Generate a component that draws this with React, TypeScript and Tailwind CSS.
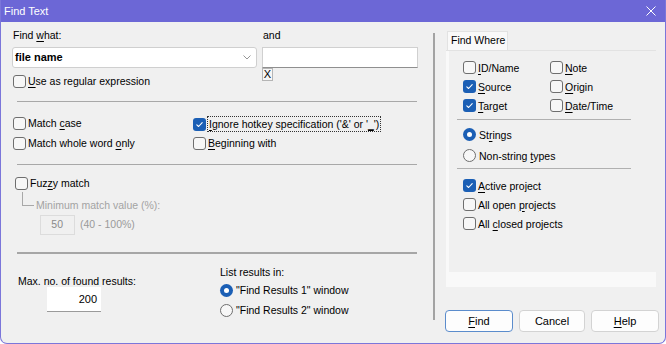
import React from 'react'

const font = { fontFamily: '"Liberation Sans", Arial, sans-serif' }

function U({ children }: { children: React.ReactNode }) {
  return <span className="underline underline-offset-[1.5px] decoration-[0.5px]">{children}</span>
}

function Box({ checked }: { checked?: boolean }) {
  if (checked) {
    return (
      <span className="flex h-[13px] w-[13px] shrink-0 items-center justify-center rounded-[3px] bg-[#1b5fb5]">
        <svg width="9" height="9" viewBox="0 0 9 9" fill="none">
          <path d="M1.8 4.8 L3.6 6.5 L7.2 2.6" stroke="white" strokeWidth="1.1" strokeLinecap="round" strokeLinejoin="round" />
        </svg>
      </span>
    )
  }
  return <span className="h-[13px] w-[13px] shrink-0 rounded-[3px] border border-[#6e6e6e] bg-[#f7f7f7]" />
}

function Radio({ checked }: { checked?: boolean }) {
  if (checked) {
    return (
      <span className="flex h-[13px] w-[13px] shrink-0 items-center justify-center rounded-full bg-[#1b5fb5]">
        <span className="h-[5px] w-[5px] rounded-full bg-white" />
      </span>
    )
  }
  return <span className="h-[13px] w-[13px] shrink-0 rounded-full border border-[#6e6e6e] bg-[#f7f7f7]" />
}

function Check({ checked, children, className = '' }: { checked?: boolean; children: React.ReactNode; className?: string }) {
  return (
    <div className={`flex items-center gap-[2px] ${className}`}>
      <Box checked={checked} />
      <span className="leading-[14px]">{children}</span>
    </div>
  )
}

function Opt({ checked, children, className = '' }: { checked?: boolean; children: React.ReactNode; className?: string }) {
  return (
    <div className={`flex items-center gap-[3px] ${className}`}>
      <Radio checked={checked} />
      <span className="leading-[14px]">{children}</span>
    </div>
  )
}

function Button({ children, primary, w = 'w-[68px]' }: { children: React.ReactNode; primary?: boolean; w?: string }) {
  return (
    <div
      className={`flex h-[22px] items-center justify-center rounded-[4px] border bg-[#fdfdfd] text-[11px] ${w} ${
        primary ? 'border-[#5b8ccc]' : 'border-[#d3d3d3]'
      }`}
    >
      {children}
    </div>
  )
}

export default function App() {
  return (
    <div style={font} className="h-[344px] w-[666px] overflow-hidden rounded-b-[7px] border-x border-b border-[#7b76da] bg-[#f0f0f0] text-[10.5px] text-black">
      {/* Title bar */}
      <div className="-mx-px flex h-[22px] items-center justify-between bg-[#6c67d6] pl-[4px] pr-[10px] text-white">
        <span className="text-[11px]">Find Text</span>
        <svg width="10" height="10" viewBox="0 0 10 10">
          <path d="M0.5 0.5 L9.5 9.5 M9.5 0.5 L0.5 9.5" stroke="white" strokeWidth="1" />
        </svg>
      </div>

      <div className="flex">
        {/* Left side */}
        <div className="flex w-[432px] flex-col pl-[11px]">
          <div className="mt-[6px] flex h-[15px] leading-[15px]">
            <span className="ml-px w-[250px]">
              Find <U>w</U>hat:
            </span>
            <span>and</span>
          </div>

          <div className="mt-[4px] flex h-[21px]">
            <div className="flex w-[245px] items-center justify-between rounded-[3px] border border-[#cfcfcf] bg-white pl-[2px] pr-[5px]">
              <span className="text-[11px] font-bold">file name</span>
              <svg width="8" height="5" viewBox="0 0 8 5">
                <path d="M0.5 0.5 L4 4 L7.5 0.5" stroke="#8a8a8a" strokeWidth="0.9" fill="none" />
              </svg>
            </div>
            <div className="ml-[5px] w-[156px] border border-[#d0d0d0] border-b-[#8f8f8f] bg-white" />
          </div>

          <div className="flex h-[20px]">
            <div className="w-[250px] pt-[6px]">
              <Check className="ml-[1px]">
                <U>U</U>se as regular expression
              </Check>
            </div>
            <div className="flex h-[13px] w-[11px] items-center justify-center border border-[#b5b5b5] bg-[#f6f6f6] text-[11px] leading-none">
              X
            </div>
          </div>

          <div className="ml-[5px] mt-[13px] h-px w-[400px] bg-[#a8a8a8]" />

          <div className="ml-[1px] mt-[11px] grid grid-cols-[180px_1fr] grid-rows-[20px_20px]">
            <Check>
              Match <U>c</U>ase
            </Check>
            <div className="flex items-center gap-[1px] pt-[2px]">
              <Box checked />
              <span className="border border-dotted border-[#333] px-px leading-[14px]">
                <U>I</U>gnore hotkey specification ('&amp;' or '<U>_</U>')
              </span>
            </div>
            <Check>
              Match whole word <U>o</U>nly
            </Check>
            <Check>
              <U>B</U>eginning with
            </Check>
          </div>

          <div className="ml-[5px] mt-[11px] h-px w-[400px] bg-[#a8a8a8]" />

          <div className="ml-[3px] mt-[10px] flex h-[16px] items-center">
            <Check>
              Fuz<U>z</U>y match
            </Check>
          </div>

          <div className="ml-[10px] mt-[1px] flex h-[21px] items-start text-[#a3a3a3]">
            <div className="h-[14px] w-[12px] border-b border-l border-[#a8a8a8]" />
            <span className="ml-[2px] mt-[5px] leading-[16px]">Minimum match value (%):</span>
          </div>

          <div className="mt-[2px] flex h-[20px] items-center text-[#9a9a9a]">
            <div className="ml-[28px] flex h-[20px] w-[35px] items-center justify-end border border-[#dcdcdc] pr-[11px] text-[#8a8a8a]">
              50
            </div>
            <span className="ml-[5px]">(40 - 100%)</span>
          </div>

          <div className="ml-[5px] mt-[17px] h-[2px] w-[400px] bg-[#a6a6a6]" />

          <div className="ml-[6px] flex">
            <div className="flex w-[202px] flex-col">
              <span className="mt-[21px] leading-[12px]">Max. no. of found results:</span>
              <div className="ml-[29px] flex h-[25px] w-[54px] items-center justify-end border-b border-[#9a9a9a] bg-white pr-[4px] text-[11px]">
                200
              </div>
            </div>
            <div className="flex flex-col">
              <span className="mt-[10px] leading-[16px]">List results in:</span>
              <Opt checked className="h-[20px]">
                "Find Results 1" window
              </Opt>
              <Opt className="h-[20px]">"Find Results 2" window</Opt>
            </div>
          </div>
        </div>

        {/* Divider */}
        <div className="mt-[11px] h-[287px] w-[2px] bg-[#a3a3a3]" />

        {/* Right side */}
        <div className="flex flex-col">
          <div className="ml-[12px] mt-[9px] flex h-[19px] w-[61px] items-center whitespace-nowrap border-l border-r border-t border-[#e2e2e2] bg-[#f9f9f9] pl-[3px] text-[10.5px]">
            Find Where
          </div>
          <div className="ml-[11px] h-[237px] w-[210px] border-t border-[#e2e2e2] bg-[#f9f9f9]">
            <div className="ml-[3px] flex h-[221px] flex-col bg-[#f0f0f0]">
              <div className="ml-[14px] mt-[7px] grid grid-cols-[87px_1fr] grid-rows-[19px_19px_19px]">
                <Check>
                  <U>I</U>D/Name
                </Check>
                <Check>
                  <U>N</U>ote
                </Check>
                <Check checked>
                  <U>S</U>ource
                </Check>
                <Check>
                  <U>O</U>rigin
                </Check>
                <Check checked>
                  <U>T</U>arget
                </Check>
                <Check>
                  <U>D</U>ate/Time
                </Check>
              </div>
              <div className="ml-[8px] mt-[4px] h-px w-[174px] bg-[#b0b0b0]" />
              <div className="ml-[14px] mt-[4px] flex flex-col">
                <Opt checked className="h-[21px]">
                  St<U>r</U>ings
                </Opt>
                <Opt className="h-[21px]">
                  Non-string <U>t</U>ypes
                </Opt>
              </div>
              <div className="ml-[8px] mt-[2px] h-px w-[174px] bg-[#b0b0b0]" />
              <div className="ml-[14px] mt-[7px] flex flex-col">
                <Check checked className="h-[19px]">
                  <U>A</U>ctive project
                </Check>
                <Check className="h-[19px]">
                  All open <U>p</U>rojects
                </Check>
                <Check className="h-[19px]">
                  All <U>c</U>losed projects
                </Check>
              </div>
            </div>
          </div>
          <div className="ml-[10px] mt-[23px] flex gap-[6px]">
            <Button primary>
              <U>F</U>ind
            </Button>
            <Button w="w-[66px]">Cancel</Button>
            <Button>
              <U>H</U>elp
            </Button>
          </div>
        </div>
      </div>
    </div>
  )
}
